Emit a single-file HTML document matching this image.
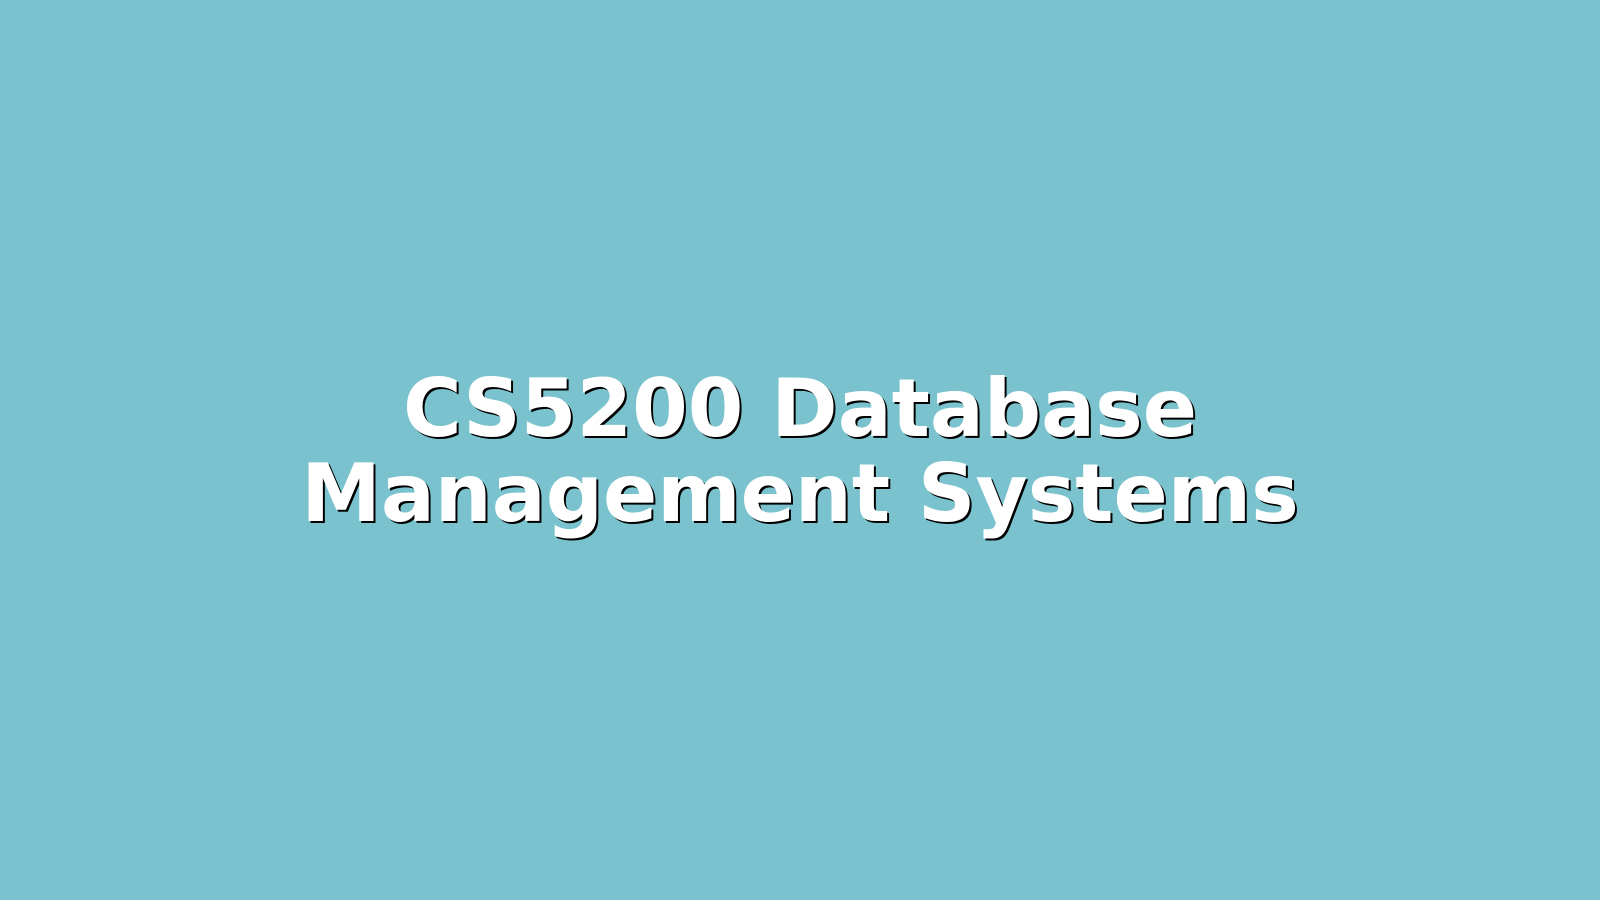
<!DOCTYPE html>
<html><head><meta charset="utf-8"><style>
html,body{margin:0;padding:0;width:1600px;height:900px;overflow:hidden;background:#7ac3ce;}
.t{position:absolute;left:0;top:366px;width:1600px;text-align:center;font-family:"DejaVu Sans","Liberation Sans",sans-serif;font-weight:bold;font-size:80px;line-height:85px;color:#fff;text-shadow:2px 2px 0 #000;}
</style></head><body>
<div class="t">CS5200 Database<br>Management Systems</div>
</body></html>
